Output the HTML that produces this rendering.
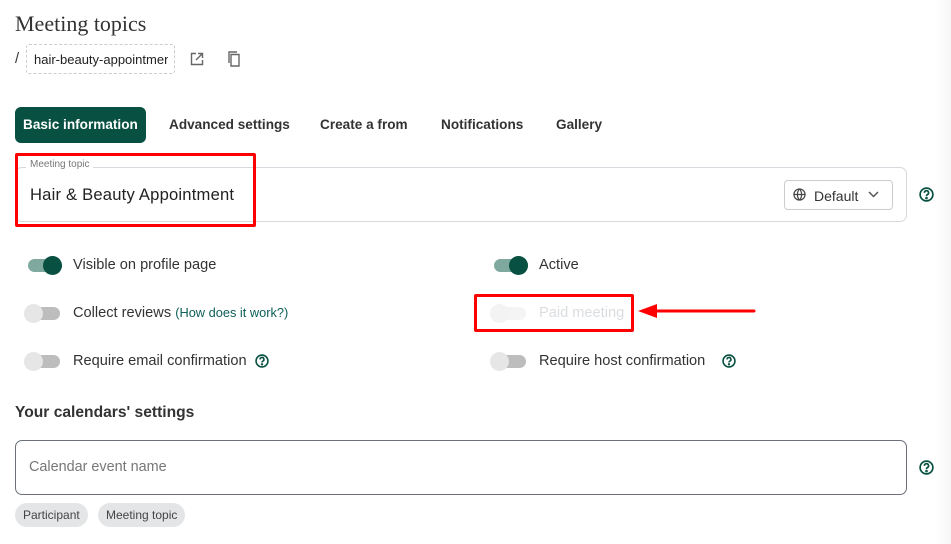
<!DOCTYPE html>
<html><head><meta charset="utf-8"><style>
*{box-sizing:border-box;margin:0;padding:0}
body{width:951px;height:544px;overflow:hidden;background:#fff;font-family:"Liberation Sans",sans-serif;color:#333;position:relative}
.a{position:absolute}
.edge{right:0;top:0;width:16px;height:544px;background:linear-gradient(to right,#fff,#f6f6f6)}
h1{position:absolute;left:15px;top:11px;font-family:"Liberation Serif",serif;font-weight:normal;font-size:22px;color:#333}
.slug{left:26px;top:44px;width:149px;height:30px;border:1px dashed #ccc;border-radius:3px;font-size:13px;padding:7px 0 0 7px;overflow:hidden;white-space:nowrap;color:#222}
.slug span{display:block;width:134px;overflow:hidden}
.tab{top:107px;height:36px;font-size:13.6px;font-weight:bold;color:#333;line-height:36px}
.tab.on{background:#085041;color:#fff;border-radius:6px;padding:0 8px}
.field{left:15px;top:167px;width:892px;height:55px;border:1px solid #d6d9dd;border-radius:7px}
.lbl{left:26px;top:159px;background:#fff;padding:0 4px;font-size:10px;color:#777}
.val{left:30px;top:185px;font-size:16.6px;color:#222;letter-spacing:.2px}
.def{left:784px;top:180px;width:109px;height:30px;border:1px solid #ccc;border-radius:4px;font-size:14px;color:#333;padding:7px 0 0 29px}
.red{border:3px solid #f00;border-radius:2px}
.tg{width:36px;height:18px}
.tg .tr{position:absolute;left:2px;top:3px;width:34px;height:13px;border-radius:7px;background:#bdbdbd}
.tg .k{position:absolute;top:0;width:19px;height:19px;border-radius:50%;background:#e6e6e6}
.tg.on .tr{background:#7fa89f}.tg.on .k{left:17px;background:#085041}
.tg.off .k{left:0}
.t{font-size:14.6px;color:#333}
.q{width:15px;height:15px}
.chip{top:503px;height:24px;border-radius:12px;background:#e4e5e7;font-size:12px;color:#444;line-height:24px;padding:0 8px}
</style></head><body>
<div class="a edge"></div>
<h1>Meeting topics</h1>
<div class="a t" style="left:15px;top:51px">/</div>
<div class="a slug"><span>hair-beauty-appointment</span></div>
<svg class="a" style="left:190px;top:52px" width="14" height="14" viewBox="0 0 14 14" fill="none" stroke="#666" stroke-width="1.4"><path d="M6 1.5H1.5v11h11V8M8 1.5h4.5V6M12.5 1.5L6 8"/></svg>
<svg class="a" style="left:228px;top:51px" width="14" height="16" viewBox="0 0 14 16" fill="none" stroke="#666" stroke-width="1.4"><path d="M3 3.5h8v11.5H3zM1 12V1h8"/></svg>
<div class="a tab on" style="left:15px;width:131px">Basic information</div>
<div class="a tab" style="left:169px">Advanced settings</div>
<div class="a tab" style="left:320px">Create a from</div>
<div class="a tab" style="left:441px">Notifications</div>
<div class="a tab" style="left:556px">Gallery</div>
<div class="a field"></div>
<div class="a lbl">Meeting topic</div>
<div class="a val">Hair &amp; Beauty Appointment</div>
<div class="a red" style="left:15px;top:153px;width:241px;height:74px"></div>
<div class="a def">Default</div>
<svg class="a" style="left:793px;top:188px" width="13" height="13" viewBox="0 0 14 14" fill="none" stroke="#444" stroke-width="1.3"><circle cx="7" cy="7" r="6"/><path d="M1 7h12M7 1c-3 3-3 9 0 12M7 1c3 3 3 9 0 12"/></svg>
<svg class="a" style="left:868px;top:191px" width="11" height="7" viewBox="0 0 11 7" fill="none" stroke="#555" stroke-width="1.5"><path d="M1 1l4.5 4.5L10 1"/></svg>
<svg class="a q" style="left:919px;top:187px" viewBox="0 0 16 16" fill="none" stroke="#085041" stroke-width="1.8"><circle cx="8" cy="8" r="6.8"/><path d="M5.8 6.2a2.2 2.2 0 1 1 3 2c-.7.3-.8.8-.8 1.5" /><circle cx="8" cy="11.8" r=".5" fill="#085041"/></svg>

<div class="a tg on" style="left:26px;top:256px"><div class="tr"></div><div class="k"></div></div>
<div class="a t" style="left:73px;top:257px">Visible on profile page</div>
<div class="a tg off" style="left:24px;top:304px"><div class="tr"></div><div class="k"></div></div>
<div class="a t" style="left:73px;top:305px">Collect reviews <span style="font-size:12.8px;color:#0d5e58">(How does it work?)</span></div>
<div class="a tg off" style="left:24px;top:352px"><div class="tr"></div><div class="k"></div></div>
<div class="a t" style="left:73px;top:353px">Require email confirmation</div>
<svg class="a" style="left:255px;top:354px" width="14" height="14" viewBox="0 0 16 16" fill="none" stroke="#085041" stroke-width="1.8"><circle cx="8" cy="8" r="6.8"/><path d="M5.8 6.2a2.2 2.2 0 1 1 3 2c-.7.3-.8.8-.8 1.5"/><circle cx="8" cy="11.8" r=".5" fill="#085041"/></svg>

<div class="a tg on" style="left:492px;top:256px"><div class="tr"></div><div class="k"></div></div>
<div class="a t" style="left:539px;top:257px">Active</div>
<div class="a tg off" style="left:490px;top:304px;opacity:.45"><div class="tr" style="background:#e8e8e8"></div><div class="k"></div></div>
<div class="a t" style="left:539px;top:305px;color:#dadde0">Paid meeting</div>
<div class="a red" style="left:474px;top:294px;width:160px;height:38px"></div>
<svg class="a" style="left:638px;top:301px" width="118" height="20" viewBox="0 0 118 20"><path d="M0 10L19 3v14z" fill="#f00"/><path d="M17 10h99" stroke="#f00" stroke-width="3" stroke-linecap="round"/></svg>
<div class="a tg off" style="left:490px;top:352px"><div class="tr"></div><div class="k"></div></div>
<div class="a t" style="left:539px;top:353px">Require host confirmation</div>
<svg class="a" style="left:722px;top:354px" width="14" height="14" viewBox="0 0 16 16" fill="none" stroke="#085041" stroke-width="1.8"><circle cx="8" cy="8" r="6.8"/><path d="M5.8 6.2a2.2 2.2 0 1 1 3 2c-.7.3-.8.8-.8 1.5"/><circle cx="8" cy="11.8" r=".5" fill="#085041"/></svg>

<div class="a" style="left:15px;top:404px;font-size:15.6px;font-weight:bold;color:#333">Your calendars' settings</div>
<div class="a" style="left:15px;top:440px;width:892px;height:55px;border:1px solid #6b7078;border-radius:7px"></div>
<div class="a" style="left:29px;top:459px;font-size:14.4px;color:#777">Calendar event name</div>
<svg class="a q" style="left:919px;top:460px" viewBox="0 0 16 16" fill="none" stroke="#085041" stroke-width="1.8"><circle cx="8" cy="8" r="6.8"/><path d="M5.8 6.2a2.2 2.2 0 1 1 3 2c-.7.3-.8.8-.8 1.5"/><circle cx="8" cy="11.8" r=".5" fill="#085041"/></svg>
<div class="a chip" style="left:15px">Participant</div>
<div class="a chip" style="left:98px">Meeting topic</div>
</body></html>
